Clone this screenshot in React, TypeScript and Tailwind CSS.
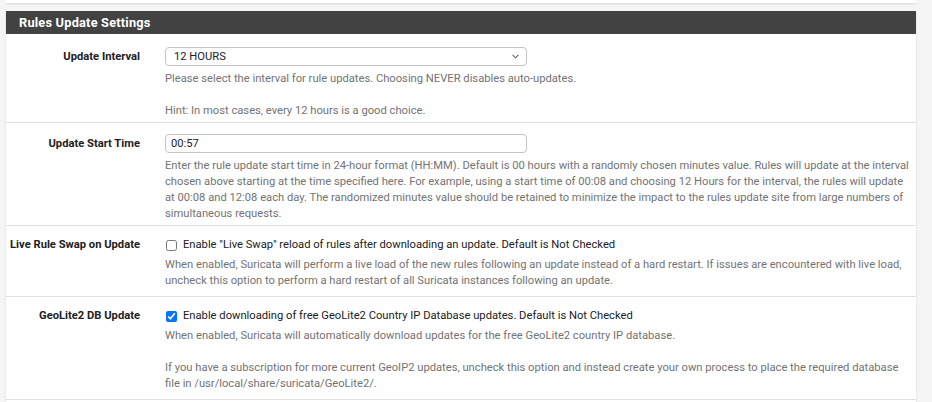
import React from 'react';

const FONT = { fontFamily: 'Roboto, "Liberation Sans", sans-serif' };

function Help({ children }: { children: React.ReactNode }) {
  return <p className="text-[11.2px] leading-[16px] text-[#737373]">{children}</p>;
}

export default function App() {
  return (
    <div className="h-[402px] overflow-hidden bg-[#f5f5f5] pl-[6px] pr-[16px]" style={FONT}>
      {/* tail of the panel above */}
      <div className="h-[3px] bg-white shadow-[0_1px_2px_rgba(0,0,0,0.12)]" />

      <div className="mt-[8px] bg-white shadow-[0_1px_2px_rgba(0,0,0,0.12)]">
        <div className="h-[23px] bg-[#424242] px-[13px] flex items-center">
          <h2 className="text-white font-bold text-[12.8px] tracking-[0.2px]">Rules Update Settings</h2>
        </div>

        {/* Update Interval */}
        <div className="flex border-b border-[#e0e0e0] pt-[13px] pb-[3px]">
          <div className="w-[134px] shrink-0 text-right font-bold text-[11.2px] leading-[19px] text-[#212121]">
            Update Interval
          </div>
          <div className="flex-1 ml-[25px] pr-[4px]">
            <div className="relative w-[362px] h-[19px]">
              <select
                defaultValue="12h"
                className="block appearance-none w-full h-[19px] border border-[#c4c4c4] rounded-[4px] bg-white pl-[8px] text-[11.2px] leading-[17px] text-[#212121] outline-none"
                style={FONT}
              >
                <option value="12h">12 HOURS</option>
              </select>
              <svg
                className="pointer-events-none absolute right-[8px] top-[7px]"
                width="7"
                height="5"
                viewBox="0 0 7 5"
                fill="none"
                stroke="#666"
                strokeWidth="1.1"
              >
                <path d="M0.6 0.8 L3.5 3.8 L6.4 0.8" />
              </svg>
            </div>
            <div className="mt-[5px]">
              <Help>
                Please select the interval for rule updates. Choosing NEVER disables auto-updates.
                <br />
                <br />
                Hint: In most cases, every 12 hours is a good choice.
              </Help>
            </div>
          </div>
        </div>

        {/* Update Start Time */}
        <div className="flex border-b border-[#e0e0e0] pt-[11px] pb-[3px]">
          <div className="w-[134px] shrink-0 text-right font-bold text-[11.2px] leading-[19px] text-[#212121]">
            Update Start Time
          </div>
          <div className="flex-1 ml-[25px] pr-[4px]">
            <input
              type="text"
              defaultValue="00:57"
              className="block w-[362px] h-[19px] border border-[#c4c4c4] rounded-[4px] bg-white pl-[5px] text-[11.2px] text-[#212121] outline-none"
              style={FONT}
            />
            <div className="mt-[5px]">
              <Help>
                Enter the rule update start time in 24-hour format (HH:MM). Default is 00 hours with a randomly chosen
                minutes value. Rules will update at the interval chosen above starting at the time specified here. For
                example, using a start time of 00:08 and choosing 12 Hours for the interval, the rules will update at
                00:08 and 12:08 each day. The randomized minutes value should be retained to minimize the impact to the
                rules update site from large numbers of simultaneous requests.
              </Help>
            </div>
          </div>
        </div>

        {/* Live Rule Swap */}
        <div className="flex border-b border-[#e0e0e0] pt-[11px] pb-[7px]">
          <div className="w-[134px] shrink-0 text-right font-bold text-[11.2px] leading-[16px] text-[#212121]">
            Live Rule Swap on Update
          </div>
          <div className="flex-1 ml-[25px] pr-[4px]">
            <label className="flex items-center h-[16px] text-[11.2px] text-[#212121]">
              <input type="checkbox" className="w-[11px] h-[11px] m-0 ml-[1px] mr-[6px]" />
              Enable "Live Swap" reload of rules after downloading an update. Default is Not Checked
            </label>
            <div className="mt-[4px]">
              <Help>
                When enabled, Suricata will perform a live load of the new rules following an update instead of a hard
                restart. If issues are encountered with live load, uncheck this option to perform a hard restart of all
                Suricata instances following an update.
              </Help>
            </div>
          </div>
        </div>

        {/* GeoLite2 */}
        <div className="flex border-b border-[#e0e0e0] pt-[11px] pb-[7px]">
          <div className="w-[134px] shrink-0 text-right font-bold text-[11.2px] leading-[16px] text-[#212121]">
            GeoLite2 DB Update
          </div>
          <div className="flex-1 ml-[25px] pr-[4px]">
            <label className="flex items-center h-[16px] text-[11.2px] text-[#212121]">
              <input type="checkbox" defaultChecked className="w-[11px] h-[11px] m-0 ml-[1px] mr-[6px]" />
              Enable downloading of free GeoLite2 Country IP Database updates. Default is Not Checked
            </label>
            <div className="mt-[4px]">
              <Help>
                When enabled, Suricata will automatically download updates for the free GeoLite2 country IP database.
                <br />
                <br />
                If you have a subscription for more current GeoIP2 updates, uncheck this option and instead create your
                own process to place the required database file in /usr/local/share/suricata/GeoLite2/.
              </Help>
            </div>
          </div>
        </div>
        <div className="h-[20px]" />
      </div>
    </div>
  );
}
